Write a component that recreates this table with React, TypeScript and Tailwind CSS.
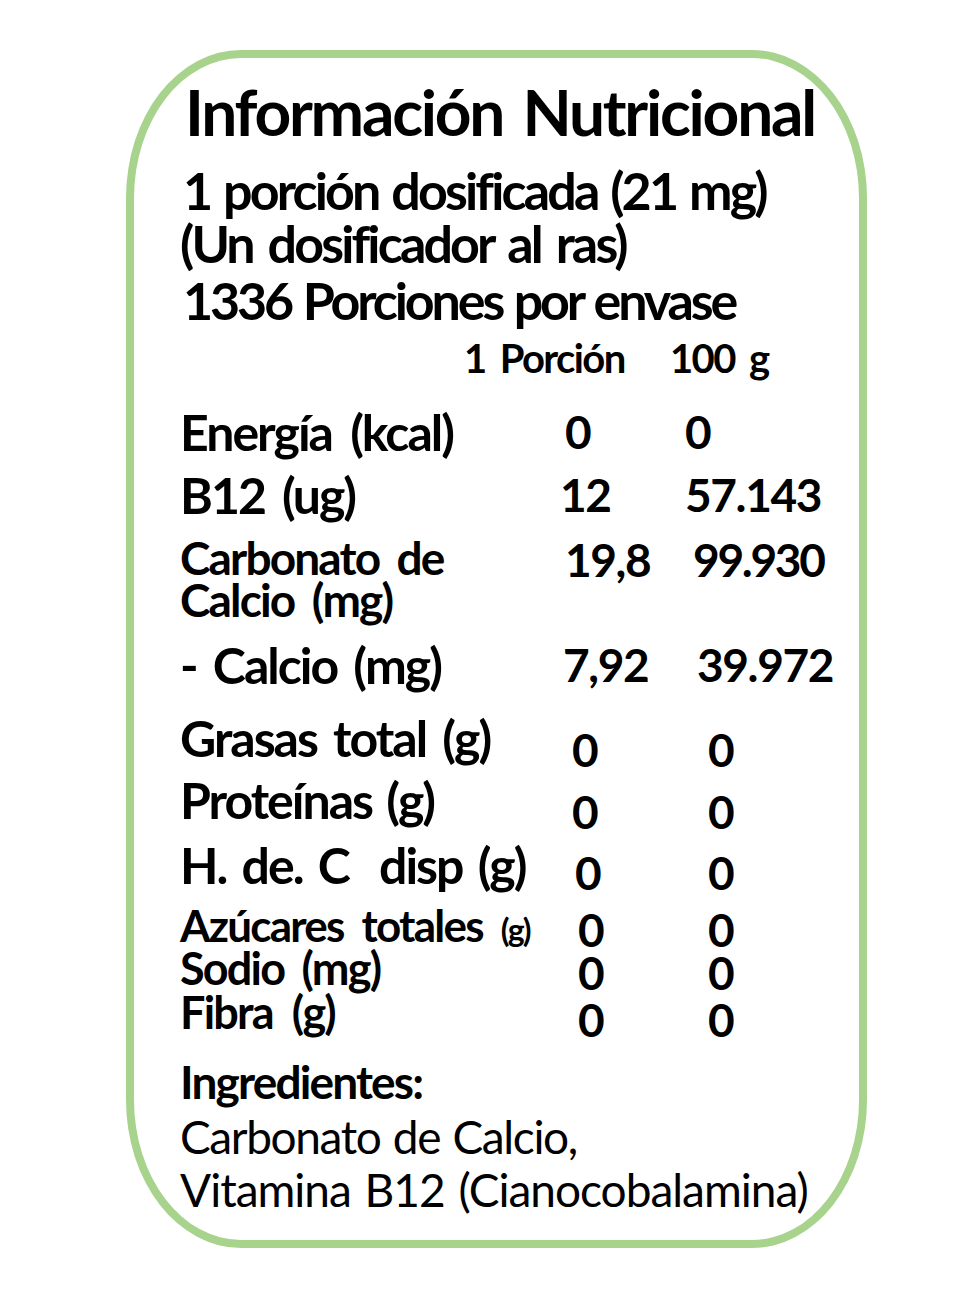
import React from 'react';

type Row = {
  label: React.ReactNode;
  v1: string;
  v2: string;
  rowCls: string; // margin-top + height of the row
  labelCls: string;
  valCls: string; // vertical nudge for values
  v1Cls: string;
  v2Cls: string;
};

const rows: Row[] = [
  {
    label: 'Energía (kcal)',
    v1: '0',
    v2: '0',
    rowCls: 'mt-[29px] h-[50px]',
    labelCls: 'text-[50px] leading-[50px] [word-spacing:8px]',
    valCls: 'leading-[50px]',
    v1Cls: 'pl-[5px]',
    v2Cls: 'pl-[0px]',
  },
  {
    label: 'B12 (ug)',
    v1: '12',
    v2: '57.143',
    rowCls: 'mt-[13px] h-[50px]',
    labelCls: 'text-[50px] leading-[50px] [word-spacing:7px]',
    valCls: 'leading-[50px]',
    v1Cls: 'pl-[0px]',
    v2Cls: 'pl-[0px]',
  },
  {
    label: (
      <>
        Carbonato de
        <br />
        Calcio (mg)
      </>
    ),
    v1: '19,8',
    v2: '99.930',
    rowCls: 'mt-[17px] h-[84px]',
    labelCls: 'text-[46px] leading-[42px] [word-spacing:8px]',
    valCls: 'leading-[46px]',
    v1Cls: 'pl-[5px]',
    v2Cls: 'pl-[8px] tracking-[-0.05em]',
  },
  {
    label: '- Calcio (mg)',
    v1: '7,92',
    v2: '39.972',
    rowCls: 'mt-[19px] h-[50px]',
    labelCls: 'text-[50px] leading-[50px] [word-spacing:6px]',
    valCls: 'leading-[50px]',
    v1Cls: 'pl-[3px]',
    v2Cls: 'pl-[12px]',
  },
  {
    label: 'Grasas total (g)',
    v1: '0',
    v2: '0',
    rowCls: 'mt-[23px] h-[50px]',
    labelCls: 'text-[50px] leading-[50px] [word-spacing:6px]',
    valCls: 'leading-[50px] mt-[12px]',
    v1Cls: 'pl-[12px]',
    v2Cls: 'pl-[23px]',
  },
  {
    label: 'Proteínas (g)',
    v1: '0',
    v2: '0',
    rowCls: 'mt-[12px] h-[50px]',
    labelCls: 'text-[50px] leading-[50px] [word-spacing:4px]',
    valCls: 'leading-[50px] mt-[12px]',
    v1Cls: 'pl-[12px]',
    v2Cls: 'pl-[23px]',
  },
  {
    label: 'H. de. C\u00a0 disp (g)',
    v1: '0',
    v2: '0',
    rowCls: 'mt-[15px] h-[50px]',
    labelCls: 'text-[50px] leading-[50px] [word-spacing:5px]',
    valCls: 'leading-[50px] mt-[8px]',
    v1Cls: 'pl-[15px]',
    v2Cls: 'pl-[23px]',
  },
  {
    label: (
      <>
        Azúcares totales <span className="text-[32px]">(g)</span>
      </>
    ),
    v1: '0',
    v2: '0',
    rowCls: 'mt-[15px] h-[40px]',
    labelCls: 'text-[44px] leading-[40px] [word-spacing:9px]',
    valCls: 'leading-[40px] mt-[5px]',
    v1Cls: 'pl-[18px]',
    v2Cls: 'pl-[23px]',
  },
  {
    label: 'Sodio (mg)',
    v1: '0',
    v2: '0',
    rowCls: 'mt-[3px] h-[40px]',
    labelCls: 'text-[45px] leading-[40px] [word-spacing:8px]',
    valCls: 'leading-[40px] mt-[5px]',
    v1Cls: 'pl-[18px]',
    v2Cls: 'pl-[23px]',
  },
  {
    label: 'Fibra (g)',
    v1: '0',
    v2: '0',
    rowCls: 'mt-[4px] h-[40px]',
    labelCls: 'text-[45px] leading-[40px] [word-spacing:10px]',
    valCls: 'leading-[40px] mt-[8px]',
    v1Cls: 'pl-[18px]',
    v2Cls: 'pl-[23px]',
  },
];

function NutritionRow({ row }: { row: Row }) {
  return (
    <div className={`flex ${row.rowCls}`}>
      <div className={`w-[380px] shrink-0 tracking-[-0.04em] ${row.labelCls}`}>
        {row.label}
      </div>
      <div className={`w-[125px] shrink-0 text-[46px] tracking-[-0.03em] ${row.valCls} ${row.v1Cls}`}>
        {row.v1}
      </div>
      <div className={`shrink-0 text-[46px] tracking-[-0.03em] ${row.valCls} ${row.v2Cls}`}>
        {row.v2}
      </div>
    </div>
  );
}

export default function App() {
  return (
    <div
      className="h-[1307px] w-[980px] bg-white pl-[126px] pt-[50px] text-black"
      style={{ fontFamily: 'Lato, "Open Sans", sans-serif' }}
    >
      <div className="h-[1198px] w-[741px] rounded-[115px/148px] border-[8px] border-[#a8d38c] pl-[46px] pt-[22px] font-bold">
        <div className="pl-[5px] text-[64px] leading-[64px] tracking-[-0.035em] [word-spacing:6px]">
          Información Nutricional
        </div>
        <div className="mt-[21px] h-[50px] pl-[3px] text-[52px] leading-[50px] tracking-[-0.055em] [word-spacing:3px]">
          1 porción dosificada (21 mg)
        </div>
        <div className="mt-[3px] h-[50px] text-[52px] leading-[50px] tracking-[-0.055em] [word-spacing:5px]">
          (Un dosificador al ras)
        </div>
        <div className="mt-[7px] h-[50px] pl-[3px] text-[52px] leading-[50px] tracking-[-0.06em] [word-spacing:2px]">
          1336 Porciones por envase
        </div>
        <div className="mt-[13px] flex h-[40px] text-[40px] leading-[40px] tracking-[-0.04em] [word-spacing:6px]">
          <div className="w-[490px] shrink-0 pl-[284px]">1 Porción</div>
          <div>100 g</div>
        </div>

        {rows.map((row, i) => (
          <NutritionRow key={i} row={row} />
        ))}

        <div className="mt-[25px] h-[50px] text-[46px] leading-[50px] tracking-[-0.04em]">
          Ingredientes:
        </div>
        <div className="mt-[5px] h-[50px] text-[46px] font-normal leading-[50px] tracking-[-0.03em] [word-spacing:2px]">
          Carbonato de Calcio,
        </div>
        <div className="mt-[3px] h-[50px] text-[46px] font-normal leading-[50px] tracking-[-0.022em] [word-spacing:3px]">
          Vitamina B12 (Cianocobalamina)
        </div>
      </div>
    </div>
  );
}
